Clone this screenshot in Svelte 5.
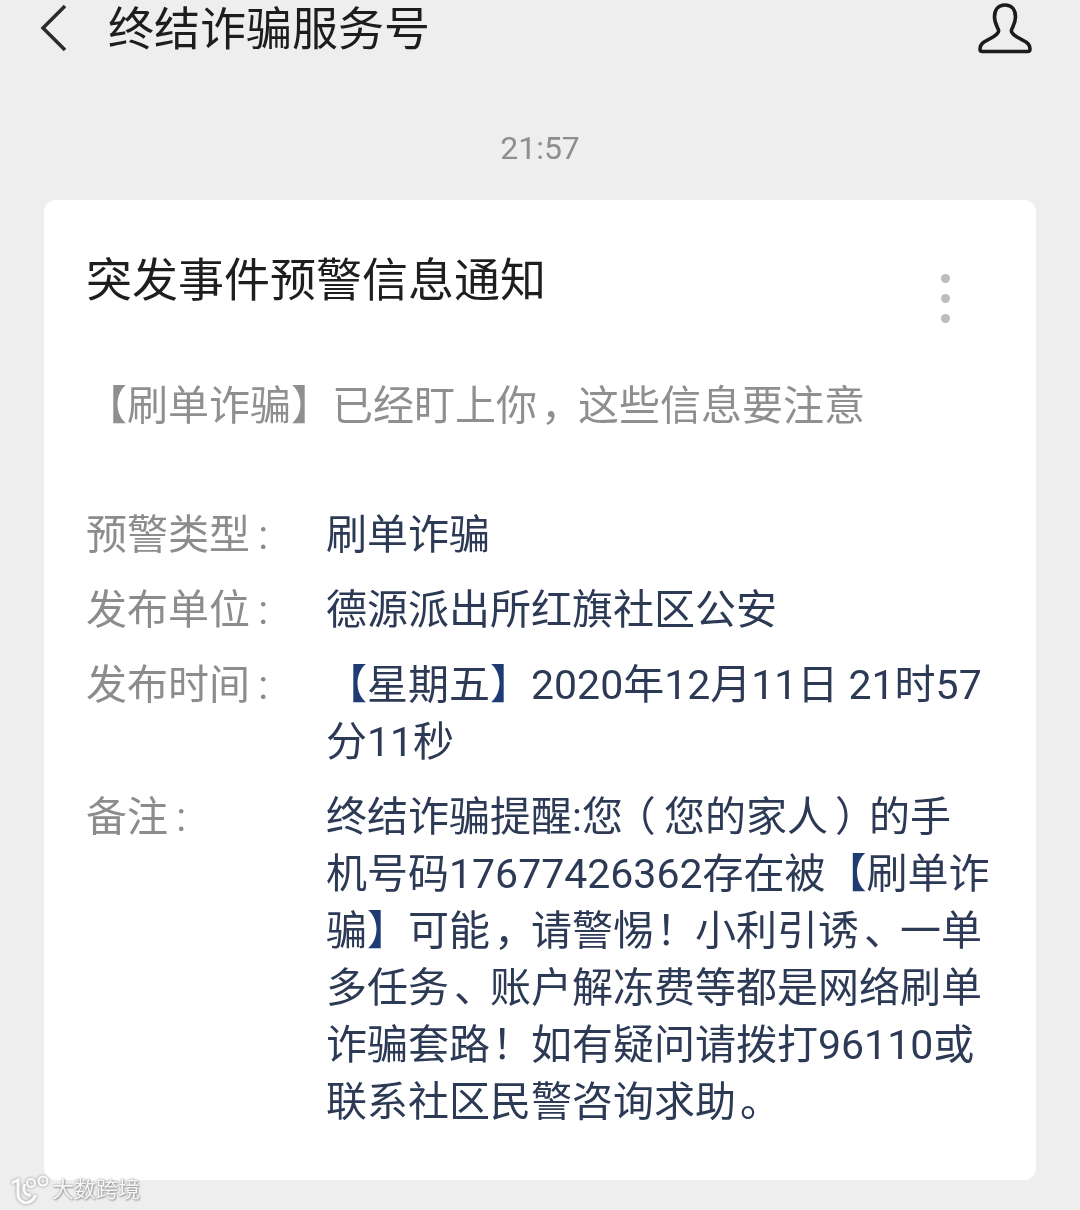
<script>
    const rows = [
        { label: '预警类型 :', lines: ['刷单诈骗'] },
        { label: '发布单位 :', lines: ['德源派出所红旗社区公安'] },
        { label: '发布时间 :', lines: ['【星期五】2020年12月11日 21时57', '分11秒'] },
        {
            label: '备注 :',
            lines: [
                '终结诈骗提醒:您（您的家人）的手',
                '机号码17677426362存在被【刷单诈',
                '骗】可能，请警惕！小利引诱、一单',
                '多任务、账户解冻费等都是网络刷单',
                '诈骗套路！如有疑问请拨打96110或',
                '联系社区民警咨询求助。'
            ]
        }
    ];

    // full-width punctuation sits centred in its box in the original font
    const marks = {
        '，': 'comma',
        '！': 'bang',
        '、': 'dun',
        '。': 'stop',
        '（': 'open',
        '）': 'close',
        '【': 'br',
        '】': 'br'
    };

    function split(line) {
        return line.split(/([，！、。（）【】])/).filter(Boolean);
    }
</script>

{#snippet rich(line)}
    {#each split(line) as part}
        {#if marks[part]}<span class="mark {marks[part]}">{part}</span>{:else}{part}{/if}
    {/each}
{/snippet}

<div class="page">
    <header class="topbar">
        <svg class="back" width="30" height="50" viewBox="0 0 30 50" aria-hidden="true">
            <path d="M26 3 L4 25 L26 47" fill="none" stroke="#2b2b2b" stroke-width="3.5" />
        </svg>
        <h1 class="name">终结诈骗服务号</h1>
        <svg class="user" width="54" height="52" viewBox="0 0 54 52" aria-hidden="true">
            <path
                d="M27 3 C20 3 16.5 8 16.5 15 C16.5 21 19.5 25 20.5 28 C21.5 31 18 33 15 35 L6 40 C3 42 2 44 2 47 Q2 49.5 4.5 49.5 L49.5 49.5 Q52 49.5 52 47 C52 44 51 42 48 40 L39 35 C36 33 32.5 31 33.5 28 C34.5 25 37.5 21 37.5 15 C37.5 8 34 3 27 3 Z"
                fill="none"
                stroke="#1c1c1c"
                stroke-width="3.6"
            />
        </svg>
    </header>

    <div class="time">21:57</div>

    <section class="card">
        <div class="card-head">
            <h2 class="title">突发事件预警信息通知</h2>
            <div class="dots"><span></span><span></span><span></span></div>
        </div>

        <p class="summary">{@render rich('【刷单诈骗】已经盯上你，这些信息要注意')}</p>

        <div class="rows">
            {#each rows as row}
                <div class="row">
                    <div class="label">{row.label}</div>
                    <div class="value">
                        {#each row.lines as line}
                            <div>{@render rich(line)}</div>
                        {/each}
                    </div>
                </div>
            {/each}
        </div>
    </section>

    <div class="watermark">
        <svg width="40" height="32" viewBox="0 0 40 32" aria-hidden="true">
            <g fill="none" stroke="#fbfbfb" stroke-width="3">
                <path d="M2 9 L8 6 L8 20 C8 27 15 31 21 27 C24 25 25 23 25 21" />
                <path d="M15 10 C12 16 15 22 21 21" />
                <circle cx="21" cy="9" r="4" stroke-width="2.2" />
                <circle cx="33" cy="7" r="4.5" stroke-width="2.2" />
            </g>
        </svg>
        <span>大数跨境</span>
    </div>
</div>

<style>
    :global(body) {
        margin: 0;
        background: #eeeeee;
    }

    .page {
        position: relative;
        width: 1080px;
        height: 1210px;
        overflow: hidden;
        background: #eeeeee;
        font-family: "Roboto", "Noto Sans CJK SC", sans-serif;
        filter: blur(0.35px);
    }

    .topbar {
        display: flex;
        align-items: flex-start;
        height: 52px;
        padding: 0 48px 0 39px;
    }

    .back {
        flex: none;
        margin: 3px 39px 0 0;
    }

    .name {
        flex: 1;
        margin: 3px 0 0 0;
        font-size: 46px;
        font-weight: 400;
        line-height: 52px;
        color: #1d1d1d;
    }

    .user {
        flex: none;
        margin-top: 2px;
    }

    .time {
        margin-top: 76px;
        height: 40px;
        font-size: 32px;
        line-height: 40px;
        text-align: center;
        color: #8e8e8e;
    }

    .card {
        box-sizing: border-box;
        width: 992px;
        height: 980px;
        margin: 32px 0 0 44px;
        padding: 50px 0 0 42px;
        background: #ffffff;
        border-radius: 12px;
    }

    .card-head {
        display: flex;
        align-items: flex-start;
    }

    .title {
        flex: 1;
        margin: 0;
        font-size: 46px;
        font-weight: 400;
        line-height: 60px;
        color: #1e1e1e;
    }

    .dots {
        display: flex;
        flex-direction: column;
        gap: 11px;
        margin: 24px 86px 0 0;
    }

    .dots span {
        width: 9px;
        height: 9px;
        border-radius: 50%;
        background: #bdbdbd;
    }

    .summary {
        margin: 53px 0 0 0;
        font-size: 41px;
        line-height: 60px;
        color: #8f8f8f;
        white-space: nowrap;
    }

    .rows {
        display: flex;
        flex-direction: column;
        gap: 18px;
        margin-top: 71px;
        font-size: 41px;
        line-height: 57px;
    }

    .row {
        display: grid;
        grid-template-columns: 240px 1fr;
    }

    .label {
        color: #8c8c8c;
        word-spacing: -2px;
    }

    .value {
        color: #2c3a55;
        white-space: nowrap;
    }

    /* halt trims the glyph to half width so it can be placed inside a 1em box */
    .mark {
        display: inline-block;
        box-sizing: border-box;
        width: 1em;
    }

    .comma,
    .bang,
    .dun,
    .stop,
    .open,
    .close {
        font-feature-settings: "halt";
    }

    .comma {
        padding-left: 0.1em;
    }

    .bang {
        padding-left: 0.05em;
    }

    .dun {
        padding-left: 0.12em;
    }

    .stop {
        padding-left: 0.1em;
    }

    .open {
        padding-left: 0.3em;
    }

    .close {
        padding-left: 0.17em;
    }

    .value .br {
        color: #1f3b73;
    }

    .watermark {
        position: absolute;
        left: 10px;
        bottom: 4px;
        display: flex;
        align-items: center;
        gap: 2px;
        font-size: 22px;
        line-height: 32px;
        color: #f8f8f8;
        text-shadow: 0 0 2px #8a8a8a, 1px 1px 2px #9a9a9a;
    }

    .watermark svg {
        filter: drop-shadow(0 0 1.5px #8a8a8a);
    }
</style>
